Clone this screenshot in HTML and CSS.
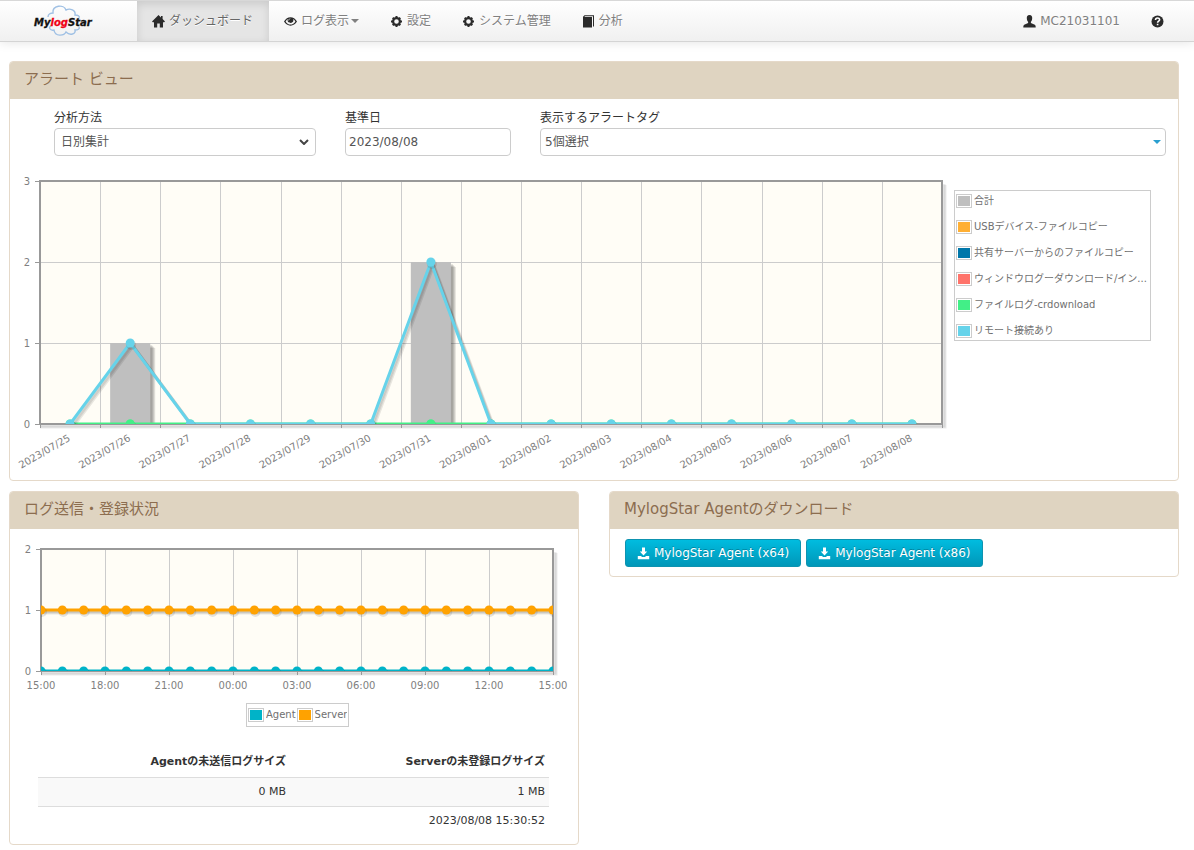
FILE: index.html
```html
<!DOCTYPE html>
<html lang="ja">
<head>
    <meta charset="UTF-8">
    <meta name="viewport" content="width=device-width, initial-scale=1.0">
    <title>MylogStar</title>
    <link rel="stylesheet" href="styles.css">
</head>
<body>
    <nav class="navbar">
        <a class="brand" href="#" aria-label="MylogStar">
            <svg width="66" height="32" viewBox="0 0 66 32">
                <path class="cloud" d="M15 12 C15 9 18 8 20 8 C19 0 31 -1 33 5 C37 3 43 5 42 10 C45 10 47 11 46 13"/>
                <path class="cloud" d="M18 21 C15 22 17 26 21 25 C22 32 31 31 33 27 C37 31 43 29 42 25 C45 25 47 24 46 22"/>
                <text x="1" y="21">My<tspan class="logo-red">log</tspan>Star</text>
            </svg>
        </a>
        <ul class="nav">
            <li>
                <a class="nav-link active" href="#">
                    <svg class="icon" viewBox="0 0 13 13"><path d="M6.5 0 L0 6.5 L0.8 7.2 H2 V12.5 H5.2 V8.5 H7.8 V12.5 H11 V7.2 H12.2 L13 6.5 L10.6 4.1 V1 H9 V2.5 Z"/></svg>
                    ダッシュボード
                </a>
            </li>
            <li>
                <a class="nav-link" href="#">
                    <svg class="icon" viewBox="0 0 13 13"><path fill-rule="evenodd" d="M0 6.5 C3 0.8 10 0.8 13 6.5 C10 12 3 12 0 6.5 Z M1.6 6.5 C3.6 10.6 9.4 10.6 11.4 6.5 C10.7 5.2 10 4.5 9.2 4 C10.8 9.2 2.2 9.2 3.8 4 C3 4.5 2.3 5.2 1.6 6.5 Z M5 5.6 A1.3 1.3 0 0 1 6.4 4.1 L6.4 3.4 A2 2 0 0 0 4.4 5.6 Z"/></svg>
                    ログ表示<span class="caret"></span>
                </a>
            </li>
            <li>
                <a class="nav-link" href="#">
                    <svg class="icon" viewBox="0 0 13 13"><use href="#cog"/></svg>
                    設定
                </a>
            </li>
            <li>
                <a class="nav-link" href="#">
                    <svg class="icon" viewBox="0 0 13 13"><use href="#cog"/></svg>
                    システム管理
                </a>
            </li>
            <li>
                <a class="nav-link" href="#">
                    <svg class="icon" viewBox="0 0 13 13"><path d="M1 1.8 L2.5 0.3 H12 V11 L11 12 V1.3 H3 L2.4 2 H10 V12.5 H1 Z"/></svg>
                    分析
                </a>
            </li>
        </ul>
        <ul class="nav nav-right">
            <li>
                <a class="nav-link" href="#">
                    <svg class="icon" viewBox="0 0 13 13"><path d="M6.5 0 C8.6 0 9.3 1.4 9.2 3.2 C9.1 5 8.6 6 7.9 6.8 V8 L11.8 9.8 C12.5 10.2 12.7 11 12.7 12.4 H0.3 C0.3 11 0.5 10.2 1.2 9.8 L5.1 8 V6.8 C4.4 6 3.9 5 3.8 3.2 C3.7 1.4 4.4 0 6.5 0 Z"/></svg>
                    MC21031101
                </a>
            </li>
            <li>
                <a class="nav-link" href="#" aria-label="Help">
                    <svg class="icon" viewBox="0 0 13 13">
                        <circle cx="6.5" cy="6.5" r="6"/>
                        <path class="help-mark" d="M4.5 5 C4.5 2.3 8.6 2.3 8.6 4.8 C8.6 6.2 6.6 6.2 6.6 7.8 M6.6 8.7 V10.3"/>
                    </svg>
                </a>
            </li>
        </ul>
    </nav>

    <svg class="defs" aria-hidden="true">
        <defs>
            <g id="cog">
                <circle class="cog-ring" cx="6.5" cy="6.5" r="3.4"/>
                <path class="cog-teeth" d="M6.5 1 V3 M6.5 10 V12 M1 6.5 H3 M10 6.5 H12 M2.7 2.7 L4 4 M9 9 L10.3 10.3 M10.3 2.7 L9 4 M4 9 L2.7 10.3"/>
            </g>
            <g id="download">
                <path d="M5 0.5 H8 V4.5 H10.2 L6.5 8.6 L2.8 4.5 H5 Z M0.8 9 H4 L5 10 H8 L9 9 H12.2 V12.3 H0.8 Z"/>
            </g>
        </defs>
    </svg>

    <main class="page">
        <section class="panel">
            <h2 class="panel-heading">アラート ビュー</h2>
            <form class="filters">
                <div class="field">
                    <label for="method">分析方法</label>
                    <div class="select-box">
                        <select class="control" id="method">
                            <option>日別集計</option>
                        </select>
                        <svg class="chevron" width="10" height="6" viewBox="0 0 10 6"><path d="M1 1 L5 5 L9 1"/></svg>
                    </div>
                </div>
                <div class="field">
                    <label for="base-date">基準日</label>
                    <input class="control control-date" type="text" id="base-date" value="2023/08/08">
                </div>
                <div class="field">
                    <label for="tags">表示するアラートタグ</label>
                    <button class="control control-tags" type="button" id="tags">5個選択<span class="caret caret-blue"></span></button>
                </div>
            </form>
            <div class="alert-view">
                <div class="chart alert-chart" id="alert-chart"></div>
                <ul class="legend alert-legend">
                    <li><span class="swatch gray"></span><span class="name">合計</span></li>
                    <li><span class="swatch amber"></span><span class="name">USBデバイス-ファイルコピー</span></li>
                    <li><span class="swatch navy"></span><span class="name">共有サーバーからのファイルコピー</span></li>
                    <li><span class="swatch red"></span><span class="name">ウィンドウログーダウンロード/イン...</span></li>
                    <li><span class="swatch green"></span><span class="name">ファイルログ-crdownload</span></li>
                    <li><span class="swatch sky"></span><span class="name">リモート接続あり</span></li>
                </ul>
            </div>
        </section>

        <div class="row">
            <section class="panel">
                <h2 class="panel-heading">ログ送信・登録状況</h2>
                <div class="chart log-chart" id="log-chart"></div>
                <ul class="legend log-legend">
                    <li><span class="swatch teal"></span><span class="name">Agent</span></li>
                    <li><span class="swatch orange"></span><span class="name">Server</span></li>
                </ul>
                <table class="log-table">
                    <thead>
                        <tr>
                            <th>Agentの未送信ログサイズ</th>
                            <th>Serverの未登録ログサイズ</th>
                        </tr>
                    </thead>
                    <tbody>
                        <tr class="striped">
                            <td>0 MB</td>
                            <td>1 MB</td>
                        </tr>
                        <tr>
                            <td colspan="2">2023/08/08 15:30:52</td>
                        </tr>
                    </tbody>
                </table>
            </section>

            <section class="panel">
                <h2 class="panel-heading">MylogStar Agentのダウンロード</h2>
                <div class="downloads">
                    <a class="btn" href="#"><svg class="icon" viewBox="0 0 13 13"><use href="#download"/></svg>MylogStar Agent (x64)</a>
                    <a class="btn" href="#"><svg class="icon" viewBox="0 0 13 13"><use href="#download"/></svg>MylogStar Agent (x86)</a>
                </div>
            </section>
        </div>
    </main>

    <script src="script.js"></script>
</body>
</html>
```
FILE: styles.css
```css
:root {
    --sand: #dfd4c1;
    --sand-border: #e5d9c9;
    --brown: #8c6d4f;
    --text: #333;
    --grey: #808080;
}

* {
    margin: 0;
    padding: 0;
    box-sizing: border-box;
}

body {
    background: white;
    color: var(--text);
    font-family: "DejaVu Sans", "Noto Sans CJK JP", sans-serif;
    font-size: 12px;
    line-height: 18px;
}

ul {
    list-style: none;
}

a {
    text-decoration: none;
}

.defs {
    display: block;
    width: 0;
    height: 0;
}

/* navbar */
.navbar {
    display: flex;
    height: 42px;
    border-top: 1px solid #d8d8d8;
    border-bottom: 1px solid #d4d4d4;
    background: linear-gradient(#fff, #f0f0f0);
    box-shadow: 0 1px 10px rgba(0, 0, 0, 0.1);
    padding-right: 14px;
}

.brand {
    width: 137px;
    padding: 4px 0 0 33px;
}

.brand text {
    font: italic bold 10px "DejaVu Sans", sans-serif;
    fill: #111;
    stroke: #111;
    stroke-width: 0.3;
}

.brand .logo-red {
    fill: #f00014;
    stroke: #f00014;
}

.cloud {
    fill: none;
    stroke: #9fc0e4;
    stroke-width: 1.4;
}

.nav {
    display: flex;
}

.nav-right {
    margin-left: auto;
}

.nav-link {
    display: flex;
    align-items: center;
    height: 40px;
    padding: 0 16px 0 15px;
    gap: 4px;
    color: var(--grey);
    text-shadow: 0 1px 0 white;
}

.nav-link.active {
    background: #e5e5e5;
    box-shadow: inset 0 3px 8px rgba(0, 0, 0, 0.12);
    color: #666;
}

.icon {
    width: 13px;
    height: 13px;
    fill: #2b2b2b;
    flex: none;
}

.help-mark {
    fill: none;
    stroke: white;
    stroke-width: 1.6;
}

.cog-ring {
    fill: none;
    stroke: #2b2b2b;
    stroke-width: 2.2;
}

.cog-teeth {
    fill: none;
    stroke: #2b2b2b;
    stroke-width: 2;
}

.caret {
    border: 4px solid transparent;
    border-top-color: var(--grey);
    border-bottom: 0;
    margin-left: -2px;
}

.caret-blue {
    border-top-color: #2a9fd0;
}

/* panels */
.page {
    padding: 19px 15px 5px 9px;
}

.panel {
    border: 1px solid var(--sand-border);
    border-radius: 4px;
    overflow: hidden;
}

.panel-heading {
    background: var(--sand);
    color: var(--brown);
    font-size: 15px;
    font-weight: normal;
    line-height: 20px;
    padding: 7px 14px 10px;
}

.row {
    display: grid;
    grid-template-columns: 1fr 1fr;
    align-items: start;
    gap: 30px;
    margin-top: 10px;
}

/* filter form */
.filters {
    display: grid;
    grid-template-columns: 262fr 166fr 626fr;
    gap: 29px;
    padding: 9px 12px 0 44px;
}

.field label {
    display: block;
    line-height: 20px;
}

.select-box {
    position: relative;
}

.control {
    display: block;
    width: 100%;
    height: 28px;
    border: 1px solid #ccc;
    border-radius: 4px;
    background: white;
    color: #555;
    font: inherit;
    padding: 0 6px;
    appearance: none;
}

.control-date {
    padding: 0 3px;
}

.control-tags {
    display: flex;
    align-items: center;
    justify-content: space-between;
    padding: 0 4px;
}

.chevron {
    position: absolute;
    right: 7px;
    top: 11px;
    fill: none;
    stroke: #444;
    stroke-width: 2;
    pointer-events: none;
}

/* charts */
.alert-view {
    display: flex;
    align-items: flex-start;
    padding: 15px 27px 0 0;
    gap: 5px;
}

.alert-chart {
    flex: 1;
    min-width: 0;
    height: 309px;
}

.log-chart {
    height: 166px;
}

.chart svg {
    display: block;
    width: 100%;
    height: 100%;
}

.chart text {
    font-size: 10px;
    fill: var(--grey);
}

.plot-bg {
    fill: #fffdf6;
}

.plot-frame {
    fill: none;
    stroke: #999;
    stroke-width: 2;
}

.plot-shadow {
    fill: none;
    stroke: #000;
    stroke-opacity: 0.08;
    stroke-width: 3;
}

.grid-line {
    stroke: #ccc;
    stroke-width: 1;
}

.tick {
    stroke: #999;
    stroke-width: 1;
}

.bar {
    fill: #bfbfbf;
}

.shadow {
    fill: #000;
    fill-opacity: 0.1;
}

.line {
    fill: none;
    stroke-width: 3;
}

.line-shadow {
    fill: none;
    stroke: #000;
    stroke-opacity: 0.09;
    stroke-width: 3;
}

.legend {
    border: 1px solid #ccc;
    color: #707070;
    font-size: 10px;
}

.legend li {
    display: flex;
    align-items: center;
    gap: 2px;
}

.name {
    overflow: hidden;
    white-space: nowrap;
}

.swatch {
    flex: none;
    width: 16px;
    height: 14px;
    border: 1px solid #ccc;
    padding: 1px;
    background-clip: content-box;
}

.alert-legend {
    width: 197px;
    margin-top: 19px;
    padding: 1px;
    display: grid;
    gap: 9px;
}

.alert-legend .name {
    line-height: 17px;
}

.log-legend {
    display: flex;
    width: fit-content;
    margin: 8px 0 0 calc(50% - 48px);
    padding: 2px 1px;
    gap: 1px;
}

.gray { background-color: #bfbfbf; }
.amber { background-color: #ffaf33; }
.navy { background-color: #0077aa; }
.red { background-color: #ff746b; }
.green { background-color: #42ef87; }
.sky { background-color: #66d3ea; }
.teal { background-color: #00b3c8; }
.orange { background-color: #ffa200; }

/* log table */
.log-table {
    width: calc(100% - 57px);
    margin: 20px 29px 9px 28px;
    border-collapse: collapse;
    font-size: 11px;
}

.log-table th,
.log-table td {
    height: 29px;
    padding: 0 4px;
    text-align: right;
}

.log-table th {
    height: 30px;
}

.striped {
    background: #f9f9f9;
}

.striped td {
    border-top: 1px solid #ddd;
    border-bottom: 1px solid #ddd;
}

/* downloads */
.downloads {
    display: flex;
    flex-wrap: wrap;
    gap: 5px;
    padding: 10px 15px 9px;
}

.btn {
    display: flex;
    align-items: center;
    gap: 4px;
    height: 28px;
    padding: 0 11px;
    border: 1px solid #0d93b0;
    border-radius: 3px;
    background: linear-gradient(#00bcdf, #0097b8);
    color: white;
    text-shadow: 0 -1px 0 rgba(0, 0, 0, 0.25);
}

.btn .icon {
    fill: white;
}
```
FILE: script.js
```js
const alertDates = [
    '2023/07/25', '2023/07/26', '2023/07/27', '2023/07/28', '2023/07/29',
    '2023/07/30', '2023/07/31', '2023/08/01', '2023/08/02', '2023/08/03',
    '2023/08/04', '2023/08/05', '2023/08/06', '2023/08/07', '2023/08/08'
];
const alertTotals = [0, 1, 0, 0, 0, 0, 2, 0, 0, 0, 0, 0, 0, 0, 0];
const noAlerts = alertTotals.map(() => 0);
const logHours = ['15:00', '18:00', '21:00', '00:00', '03:00', '06:00', '09:00', '12:00', '15:00'];
const hourly = value => new Array(25).fill(value);

// frame, horizontal scale and value labels shared by both charts
function plotBase(id, box, max, columns, showRows) {
    const { left, top, right, bottom } = box;
    let out = `<clipPath id="${id}-clip"><rect x="${left}" y="${top - 8}" width="${right - left}" height="${bottom - top + 8}"/></clipPath>`;
    out += `<path class="plot-shadow" d="M${right + 2} ${top + 3} V${bottom + 2} H${left}"/>`;
    out += `<path class="plot-shadow" d="M${right + 3} ${top + 4} V${bottom + 3} H${left}"/>`;
    out += `<rect class="plot-bg" x="${left}" y="${top}" width="${right - left}" height="${bottom - top}"/>`;

    for (let i = 0; i <= columns; i++) {
        const x = Math.round(left + (right - left) * i / columns) + 0.5;
        out += `<line class="grid-line" x1="${x}" x2="${x}" y1="${top}" y2="${bottom}"/>`;
        out += `<line class="tick" x1="${x}" x2="${x}" y1="${bottom}" y2="${bottom + 4}"/>`;
    }
    for (let v = 0; v <= max; v++) {
        const y = Math.round(bottom - (bottom - top) * v / max) + 0.5;
        if (showRows) {
            out += `<line class="grid-line" x1="${left}" x2="${right}" y1="${y}" y2="${y}"/>`;
        }
        out += `<line class="tick" x1="${left - 5}" x2="${left}" y1="${y}" y2="${y}"/>`;
        out += `<text x="${left - 10}" y="${y + 3}" text-anchor="end">${v}</text>`;
    }
    out += `<rect class="plot-frame" x="${left}" y="${top}" width="${right - left}" height="${bottom - top}"/>`;
    return out;
}

function drawSeries(values, color, xAt, yAt) {
    const points = values.map((v, i) => `${xAt(i)},${yAt(v)}`).join(' ');
    let out = '';
    [1, 2, 3].forEach(d => {
        out += `<polyline class="line-shadow" points="${points}" transform="translate(${d},${d})"/>`;
    });
    out += `<polyline class="line" points="${points}" stroke="${color}"/>`;
    values.forEach((v, i) => {
        out += `<circle class="shadow" cx="${xAt(i) + 1}" cy="${yAt(v) + 2}" r="5"/>`;
        out += `<circle cx="${xAt(i)}" cy="${yAt(v)}" r="4.5" fill="${color}"/>`;
    });
    return out;
}

function drawAlertChart() {
    const el = document.getElementById('alert-chart');
    const box = { left: 30, top: 10, right: el.clientWidth - 7, bottom: 253 };
    const step = (box.right - box.left) / alertDates.length;
    const xAt = i => box.left + step * (i + 0.5);
    const yAt = v => box.bottom - (box.bottom - box.top) * v / 3;
    const barWidth = step * 2 / 3;

    let out = plotBase('alert', box, 3, alertDates.length, true);
    out += '<g clip-path="url(#alert-clip)">';
    alertTotals.forEach((v, i) => {
        if (!v) return;
        const x = xAt(i) - barWidth / 2;
        const h = box.bottom - yAt(v);
        [2, 3, 4, 5].forEach(d => {
            out += `<rect class="shadow" x="${x + d}" y="${yAt(v) + d}" width="${barWidth}" height="${h}"/>`;
        });
        out += `<rect class="bar" x="${x}" y="${yAt(v)}" width="${barWidth}" height="${h}"/>`;
    });
    out += drawSeries(noAlerts, '#42ef87', xAt, yAt);
    out += drawSeries(alertTotals, '#66d3ea', xAt, yAt);
    alertTotals.forEach((v, i) => {
        if (v) out += `<circle cx="${xAt(i)}" cy="${yAt(0)}" r="4.5" fill="#42ef87"/>`;
    });
    out += '</g>';

    alertDates.forEach((date, i) => {
        const x = xAt(i) + 1;
        const y = box.bottom + 16;
        out += `<text x="${x}" y="${y}" text-anchor="end" transform="rotate(-30 ${x} ${y})">${date}</text>`;
    });
    el.innerHTML = `<svg>${out}</svg>`;
}

function drawLogChart() {
    const el = document.getElementById('log-chart');
    const box = { left: 31, top: 20, right: el.clientWidth - 25, bottom: 142 };
    const xAt = i => box.left + (box.right - box.left) * i / 24;
    const yAt = v => box.bottom - (box.bottom - box.top) * v / 2;

    let out = plotBase('log', box, 2, 8, false);
    out += '<g clip-path="url(#log-clip)">';
    out += drawSeries(hourly(0), '#00b3c8', xAt, yAt);
    out += drawSeries(hourly(1), '#ffa200', xAt, yAt);
    out += '</g>';

    logHours.forEach((hour, i) => {
        out += `<text x="${xAt(i * 3)}" y="${box.bottom + 18}" text-anchor="middle">${hour}</text>`;
    });
    el.innerHTML = `<svg>${out}</svg>`;
}

function drawCharts() {
    drawAlertChart();
    drawLogChart();
}

drawCharts();
window.addEventListener('resize', drawCharts);
```
